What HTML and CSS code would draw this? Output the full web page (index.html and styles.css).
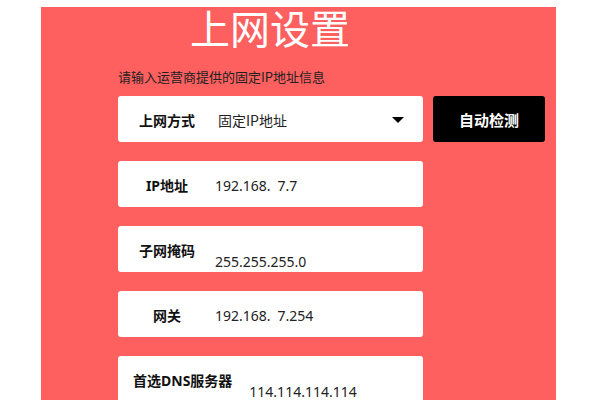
FILE: index.html
```html
<!DOCTYPE html>
<html lang="zh-CN">
<head>
<meta charset="utf-8">
<title>上网设置</title>
<link rel="stylesheet" href="styles.css">
</head>
<body>
<div class="panel">
  <h1 class="title">上网设置</h1>
  <p class="hint">请输入运营商提供的固定IP地址信息</p>
  <div class="form">
    <div class="line">
      <div class="row select-row">
        <span class="label">上网方式</span>
        <span class="value sel">固定IP地址</span>
        <svg class="caret" width="12" height="6" viewBox="0 0 12 6"><path d="M0 0H12L6 6Z" fill="#000"/></svg>
      </div>
      <button class="detect">自动检测</button>
    </div>
    <div class="row">
      <span class="label">IP地址</span>
      <span class="value">192.168.<span class="gap"></span>7.7</span>
    </div>
    <div class="row">
      <span class="label">子网掩码</span>
      <span class="value low">255.255.255.0</span>
    </div>
    <div class="row">
      <span class="label">网关</span>
      <span class="value">192.168.<span class="gap"></span>7.254</span>
    </div>
    <div class="row">
      <span class="label">首选DNS服务器</span>
      <span class="value low dns">114.114.114.114</span>
    </div>
  </div>
</div>
</body>
</html>
```
FILE: styles.css
```css
html, body {
  margin: 0;
  padding: 0;
  background: #ffffff;
  overflow: hidden;
  height: 400px;
}
body {
  font-family: "Noto Sans", "Noto Sans CJK SC", sans-serif;
}
.panel {
  margin: 7px 0 0 41px;
  width: 515px;
  height: 420px;
  background: #fe5f5f;
  padding-left: 77px;
  box-sizing: border-box;
}
.title {
  margin: 0 0 0 72px;
  font-size: 40px;
  line-height: 40px;
  font-weight: normal;
  color: #ffffff;
  font-family: "Noto Sans CJK SC", sans-serif;
}
.hint {
  margin: 22px 0 0 0;
  font-size: 13px;
  line-height: 16px;
  color: #222;
  font-family: "Noto Sans CJK SC", sans-serif;
}
.form {
  margin-top: 11px;
  display: flex;
  flex-direction: column;
  gap: 19px;
}
.line {
  display: flex;
  gap: 10px;
}
.row {
  width: 305px;
  height: 46px;
  background: #ffffff;
  border-radius: 3px;
  display: flex;
  align-items: center;
  padding-left: 15px;
  box-sizing: border-box;
}
.label {
  min-width: 68px;
  text-align: center;
  font-size: 14px;
  font-weight: bold;
  color: #111;
  white-space: nowrap;
  margin-top: 1px;
}
.value {
  margin-left: 14px;
  font-size: 14px;
  color: #222;
  white-space: nowrap;
  margin-top: 2px;
}
.value.low {
  margin-top: 24px;
}
.value.dns {
  margin-left: 17px;
}
.value.sel {
  margin-left: 17px;
  font-family: "Noto Sans CJK SC", sans-serif;
}
.gap {
  display: inline-block;
  width: 7px;
}
.caret {
  margin-left: auto;
  margin-right: 19px;
  margin-top: 2px;
}
.detect {
  width: 112px;
  height: 46px;
  background: #000;
  color: #fff;
  border: none;
  border-radius: 3px;
  font-family: "Noto Sans CJK SC", sans-serif;
  font-size: 15px;
  font-weight: bold;
  padding: 0;
}
```
